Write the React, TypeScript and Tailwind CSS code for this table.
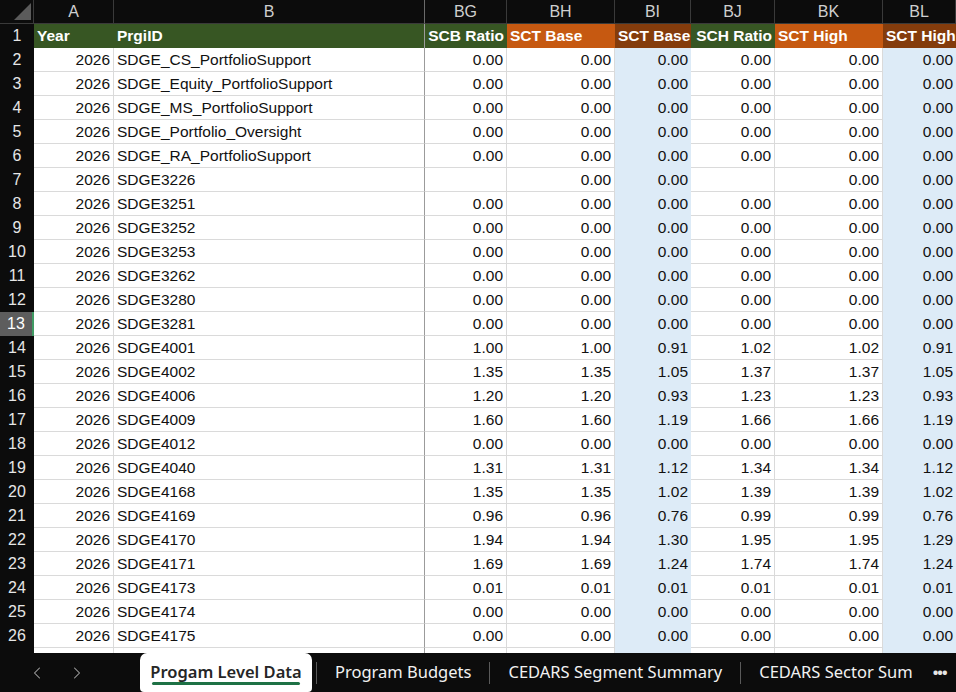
import { ChevronLeft, ChevronRight } from 'lucide-react'

type Row = [string, string, string, string, string, string, string, string]

const zeros = ['0.00', '0.00', '0.00', '0.00', '0.00', '0.00']

const rows: Row[] = [
  ['2026', 'SDGE_CS_PortfolioSupport', ...zeros] as Row,
  ['2026', 'SDGE_Equity_PortfolioSupport', ...zeros] as Row,
  ['2026', 'SDGE_MS_PortfolioSupport', ...zeros] as Row,
  ['2026', 'SDGE_Portfolio_Oversight', ...zeros] as Row,
  ['2026', 'SDGE_RA_PortfolioSupport', ...zeros] as Row,
  ['2026', 'SDGE3226', '', '0.00', '0.00', '', '0.00', '0.00'],
  ['2026', 'SDGE3251', ...zeros] as Row,
  ['2026', 'SDGE3252', ...zeros] as Row,
  ['2026', 'SDGE3253', ...zeros] as Row,
  ['2026', 'SDGE3262', ...zeros] as Row,
  ['2026', 'SDGE3280', ...zeros] as Row,
  ['2026', 'SDGE3281', ...zeros] as Row,
  ['2026', 'SDGE4001', '1.00', '1.00', '0.91', '1.02', '1.02', '0.91'],
  ['2026', 'SDGE4002', '1.35', '1.35', '1.05', '1.37', '1.37', '1.05'],
  ['2026', 'SDGE4006', '1.20', '1.20', '0.93', '1.23', '1.23', '0.93'],
  ['2026', 'SDGE4009', '1.60', '1.60', '1.19', '1.66', '1.66', '1.19'],
  ['2026', 'SDGE4012', ...zeros] as Row,
  ['2026', 'SDGE4040', '1.31', '1.31', '1.12', '1.34', '1.34', '1.12'],
  ['2026', 'SDGE4168', '1.35', '1.35', '1.02', '1.39', '1.39', '1.02'],
  ['2026', 'SDGE4169', '0.96', '0.96', '0.76', '0.99', '0.99', '0.76'],
  ['2026', 'SDGE4170', '1.94', '1.94', '1.30', '1.95', '1.95', '1.29'],
  ['2026', 'SDGE4171', '1.69', '1.69', '1.24', '1.74', '1.74', '1.24'],
  ['2026', 'SDGE4173', '0.01', '0.01', '0.01', '0.01', '0.01', '0.01'],
  ['2026', 'SDGE4174', ...zeros] as Row,
  ['2026', 'SDGE4175', ...zeros] as Row,
  ['', '', '', '', '', '', '', ''],
]

const letters = ['A', 'B', 'BG', 'BH', 'BI', 'BJ', 'BK', 'BL']

const headers = [
  { label: 'Year', bg: 'bg-[#375623]', align: 'text-left' },
  { label: 'PrgiID', bg: 'bg-[#375623]', align: 'text-left' },
  { label: 'SCB Ratio', bg: 'bg-[#375623]', align: 'text-right' },
  { label: 'SCT Base', bg: 'bg-[#c65911]', align: 'text-left' },
  { label: 'SCT Base', bg: 'bg-[#843c0c]', align: 'text-right' },
  { label: 'SCH Ratio', bg: 'bg-[#375623]', align: 'text-right' },
  { label: 'SCT High', bg: 'bg-[#c65911]', align: 'text-left' },
  { label: 'SCT High', bg: 'bg-[#843c0c]', align: 'text-right' },
]

// blue fill on BI and BL, no gridlines inside them
const blueCol = [false, false, false, false, true, false, false, true]

const colBorder = (i: number) =>
  i === 1 ? 'border-r border-r-[#9b9b9b]' : blueCol[i] ? '' : 'border-r border-r-[#dadada]'

const Tab = ({ label }: { label: string }) => (
  <div className="flex items-center">
    <div className="h-[22px] w-px bg-[#5a5a5a]" />
    <span className="px-[18px] text-[16.5px] text-[#f2f2f2]">{label}</span>
  </div>
)

export default function App() {
  return (
    <div className="flex h-[692px] w-[956px] flex-col overflow-hidden bg-[#0c0c0c] font-['Liberation_Sans',sans-serif]">
      <div className="h-[653px] overflow-hidden bg-white">
        <div className="grid w-[956px] grid-cols-[34px_80px_311px_82px_108px_76px_84px_108px_73px]">
          {/* column letters */}
          <div className="flex h-6 items-end justify-end border-r border-b border-[#3a3a3a] bg-[#0c0c0c] pr-[2px] pb-[3px]">
            <svg width="17" height="17">
              <polygon points="17,0 17,17 0,17" fill="#5b5b5b" />
            </svg>
          </div>
          {letters.map((l, i) => (
            <div
              key={l}
              className={`flex h-6 items-center justify-center border-b border-[#3a3a3a] bg-[#0c0c0c] text-[16px] text-[#cfcfcf] ${
                i === 1 ? 'border-r border-r-[#6a6a6a]' : 'border-r'
              }`}
            >
              {l}
            </div>
          ))}

          {/* row 1 headers */}
          <div className="flex h-6 items-center justify-center bg-[#0c0c0c] text-[16px] text-[#e6e6e6]">
            1
          </div>
          {headers.map((h, i) => (
            <div
              key={i}
              className={`h-6 overflow-hidden whitespace-nowrap px-[3px] text-[15.5px] leading-6 font-bold text-white ${h.bg} ${h.align} ${
                i === 1 ? 'border-r border-r-[#9b9b9b]' : ''
              }`}
            >
              {h.label}
            </div>
          ))}

          {rows.map((r, ri) => {
            const n = ri + 2
            const selected = n === 13
            return [
              <div
                key={`h${n}`}
                className={`flex h-6 items-center justify-center text-[16px] ${
                  selected
                    ? 'border-r-2 border-r-[#3f9a63] bg-[#5d5d5d] text-white'
                    : 'bg-[#0c0c0c] text-[#e6e6e6]'
                }`}
              >
                {r[0] ? n : ''}
              </div>,
              ...r.map((v, ci) => (
                <div
                  key={`${n}-${ci}`}
                  className={`h-6 overflow-hidden whitespace-nowrap px-[3px] text-[15.5px] leading-6 text-[#111] ${
                    ci === 1 ? 'text-left' : 'text-right'
                  } ${blueCol[ci] ? 'bg-[#ddebf7]' : 'border-b border-b-[#dadada]'} ${colBorder(ci)}`}
                >
                  {v}
                </div>
              )),
            ]
          })}
        </div>
      </div>

      {/* sheet tabs */}
      <div className="flex h-[39px] items-stretch bg-[#0c0c0c] font-['Noto_Sans',sans-serif]">
        <div className="flex w-[140px] items-center gap-[20px] pl-[27px] text-[#a8a8a8]">
          <ChevronLeft size={20} strokeWidth={1.25} />
          <ChevronRight size={20} strokeWidth={1.25} />
        </div>
        <div className="relative flex w-[172px] items-center justify-center rounded-t-[7px] rounded-b-[4px] bg-white">
          <span className="text-[16.5px] font-semibold text-[#262626]">Progam Level Data</span>
          <div className="absolute bottom-[7px] left-[12px] right-[12px] h-[3px] rounded-full bg-[#1e7145]" />
        </div>
        <div className="ml-[4px] flex items-center">
          <Tab label="Program Budgets" />
          <Tab label="CEDARS Segment Summary" />
          <Tab label="CEDARS Sector Sum" />
          <span className="pl-[2px] text-[15px] font-bold tracking-[-1px] text-[#e6e6e6]">•••</span>
        </div>
      </div>
    </div>
  )
}
